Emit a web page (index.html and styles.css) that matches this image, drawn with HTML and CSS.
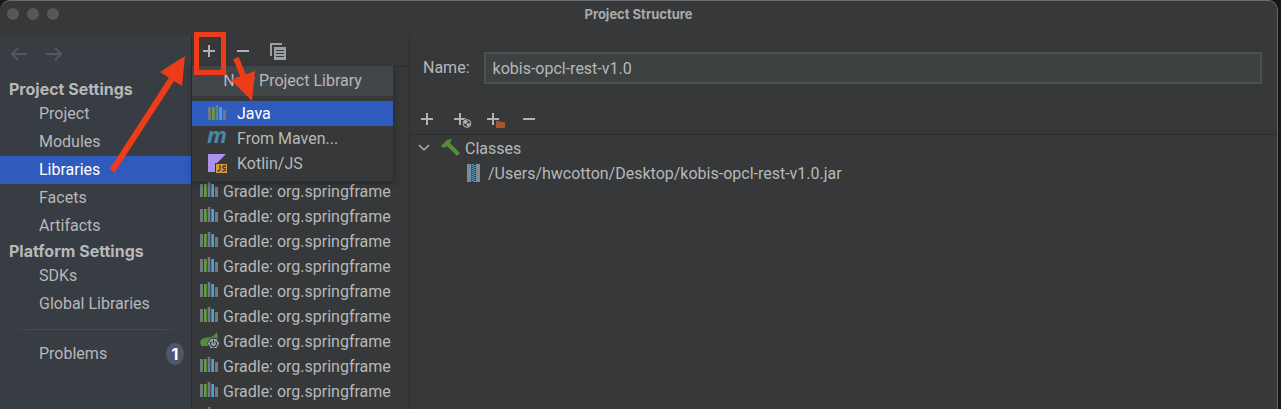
FILE: index.html
```html
<!DOCTYPE html>
<html lang="en">
<head>
<meta charset="utf-8">
<title>Project Structure</title>
<link rel="stylesheet" href="styles.css">
</head>
<body>
<svg class="defs" aria-hidden="true">
  <symbol id="library" viewBox="0 0 18 18">
    <path fill="#6e7b85" d="M0 3h3v13H0zM7.700 1h2.600v15H7.700zM15 6h3v10h-3z"/>
    <path fill="#62a03c" d="M4 3h2.700v13H4z"/>
    <path fill="#48a4d6" d="M11.300 3H14v13h-2.700z"/>
  </symbol>
  <symbol id="plus" viewBox="0 0 14 14"><path fill="#afb1b3" d="M6 1h2v5h5v2H8v5H6V8H1V6h5z"/></symbol>
  <symbol id="minus" viewBox="0 0 14 14"><path fill="#afb1b3" d="M1 6h12v2H1z"/></symbol>
</svg>
<div class="window">
  <header class="titlebar">
    <div class="lights"><i class="light"></i><i class="light"></i><i class="light"></i></div>
    <h1 class="title">Project Structure</h1>
    <div class="lights-spacer"></div>
  </header>
  <div class="body">
    <nav class="sidebar">
      <div class="history">
        <button class="icon-button" aria-label="Back" disabled><svg width="18" height="14" viewBox="0 0 18 14"><path d="M17 7H2M8 1L2 7l6 6" fill="none" stroke="#55585a" stroke-width="2"/></svg></button>
        <button class="icon-button" aria-label="Forward" disabled><svg width="18" height="14" viewBox="0 0 18 14"><path d="M1 7h15M10 1l6 6-6 6" fill="none" stroke="#55585a" stroke-width="2"/></svg></button>
      </div>
      <h2 class="group">Project Settings</h2>
      <a class="item" href="#">Project</a>
      <a class="item" href="#">Modules</a>
      <a class="item selected" href="#">Libraries</a>
      <a class="item" href="#">Facets</a>
      <a class="item" href="#">Artifacts</a>
      <h2 class="group">Platform Settings</h2>
      <a class="item" href="#">SDKs</a>
      <a class="item" href="#">Global Libraries</a>
      <hr class="rule">
      <a class="item" href="#">Problems <span class="badge">1</span></a>
    </nav>
    <section class="libraries">
      <div class="toolbar">
        <button class="icon-button" aria-label="Add"><svg width="14" height="14"><use href="#plus"/></svg></button>
        <button class="icon-button" aria-label="Remove"><svg width="14" height="14"><use href="#minus"/></svg></button>
        <button class="icon-button" aria-label="Copy"><svg width="16" height="17" viewBox="0 0 16 17"><path fill="#9da0a2" fill-rule="evenodd" d="M0 0h12v2H2v11H0zM4 4h12v13H4zM6 7v1h8V7zM6 10v1h8v-1zM6 13v1h8v-1z"/></svg></button>
      </div>
      <ul class="list">
        <li class="row"><svg class="icon"><use href="#library"/></svg><span>Gradle: org.springframework</span></li>
        <li class="row"><svg class="icon"><use href="#library"/></svg><span>Gradle: org.springframework</span></li>
        <li class="row"><svg class="icon"><use href="#library"/></svg><span>Gradle: org.springframework</span></li>
        <li class="row"><svg class="icon"><use href="#library"/></svg><span>Gradle: org.springframework</span></li>
        <li class="row"><svg class="icon"><use href="#library"/></svg><span>Gradle: org.springframework</span></li>
        <li class="row"><svg class="icon"><use href="#library"/></svg><span>Gradle: org.springframework</span></li>
        <li class="row"><svg class="icon" viewBox="0 0 18 18"><path fill="#568c39" d="M17 1c1 4 1 7-1 10l-8 4H2c-3-2-2-7 2-8 5-1 9 0 13-6z"/><path fill="#9aa7b3" stroke="#36383a" d="M10.500 7.500h6l3 5-3 5h-6l-3-5z"/><path d="M11.500 10.500a3 3 0 1 0 4 0M13.500 9v3.500" fill="none" stroke="#30363b" stroke-width="1.300"/></svg><span>Gradle: org.springframework</span></li>
        <li class="row"><svg class="icon"><use href="#library"/></svg><span>Gradle: org.springframework</span></li>
        <li class="row"><svg class="icon"><use href="#library"/></svg><span>Gradle: org.springframework</span></li>
        <li class="row"><svg class="icon"><use href="#library"/></svg><span>Gradle: org.springframework</span></li>
      </ul>
      <div class="popup" role="menu">
        <div class="popup-title">New Project Library</div>
        <div class="popup-items">
          <button class="popup-item active" role="menuitem"><svg class="icon"><use href="#library"/></svg>Java</button>
          <button class="popup-item" role="menuitem"><svg class="icon" viewBox="0 0 18 18" aria-hidden="true"><text class="maven" x="-1" y="14">m</text></svg>From Maven...</button>
          <button class="popup-item" role="menuitem"><svg class="icon" viewBox="0 0 18 18"><path fill="#a991ed" d="M0 0h18L9 9H7v9H0z"/><path fill="#d59c36" d="M8 10h11v9H8z"/><path fill="none" stroke="#493b22" stroke-width="1.300" d="M12 11v4.500q0 1.500-2.500 1.200M18 12h-2.500q-1.500 1.200 0 2.300h1q2 1.200 0 2.500H14"/></svg>Kotlin/JS</button>
        </div>
      </div>
    </section>
    <main class="details">
      <div class="field">
        <label for="name">Name:</label>
        <input id="name" class="input" type="text" value="kobis-opcl-rest-v1.0">
      </div>
      <div class="actions">
        <button class="icon-button" aria-label="Add"><svg width="20" height="18" viewBox="0 0 20 18"><use href="#plus" width="14" height="14" y="2"/></svg></button>
        <button class="icon-button" aria-label="Add from web"><svg width="20" height="18" viewBox="0 0 20 18"><use href="#plus" width="14" height="14" y="2"/><circle cx="14" cy="13.500" r="5" fill="#36383a"/><circle cx="14" cy="13.500" r="3.900" fill="#44484a" stroke="#afb1b3"/><path fill="#afb1b3" d="M10.500 11l3-1 1 2-2 2-2-1zM14.500 13l3 1-2 3-2-2z"/></svg></button>
        <button class="icon-button" aria-label="Add folder"><svg width="20" height="18" viewBox="0 0 20 18"><use href="#plus" width="14" height="14" y="2"/><path fill="#a5552e" d="M10 11h4l1 1h4v6h-9z"/></svg></button>
        <button class="icon-button" aria-label="Remove"><svg width="20" height="18" viewBox="0 0 20 18"><use href="#minus" width="14" height="14" x="3" y="2"/></svg></button>
      </div>
      <div class="tree">
        <div class="node">
          <svg width="12" height="8" viewBox="0 0 12 8"><path d="M1 1l5 5 5-5" fill="none" stroke="#afb1b3" stroke-width="1.500"/></svg>
          <svg class="hammer" width="20" height="18" viewBox="0 0 20 18"><path fill="#568c39" d="M0 7l6-6 5-1-2 4 10 10-3 3L6 7 3 9z"/></svg>
          <span>Classes</span>
        </div>
        <div class="node child">
          <svg width="13" height="18" viewBox="0 0 13 18"><path fill="#7d8b94" d="M0 0h13v18H0z"/><path fill="#2c4654" d="M4 0h5v18H4z"/><path d="M5.500 0v18" stroke="#4ba5d0" stroke-width="2" stroke-dasharray="1 1"/><path d="M7.500 1v17" stroke="#4ba5d0" stroke-width="2" stroke-dasharray="1 1"/></svg>
          <span>/Users/hwcotton/Desktop/kobis-opcl-rest-v1.0.jar</span>
        </div>
      </div>
    </main>
  </div>
  <svg class="annotation" width="270" height="180" viewBox="0 0 270 180" aria-hidden="true">
    <g fill="none" stroke="#ed3c19">
      <path stroke-width="5" d="M196.500 34.500h27v38h-27z"/>
      <path stroke-width="6" d="M112 171l61-94M236 58l8 20"/>
    </g>
    <path fill="#ed3c19" d="M185 56l-25 16 22 14zM252 101l-21-21 24-9z"/>
  </svg>
</div>
</body>
</html>
```
FILE: styles.css
```css
* { box-sizing: border-box; }
body {
  margin: 0;
  background: #171615;
  color: #b7b8b9;
  font: 16px/24px Roboto, "Liberation Sans", sans-serif;
}
.defs { position: absolute; width: 0; height: 0; }
.window {
  position: relative;
  display: flex;
  flex-direction: column;
  height: 100vh;
  margin-right: 3px;
  overflow: hidden;
  background: #36383a;
  border-top: 1px solid #6c6e6f;
  border-right: 1px solid #626465;
  border-radius: 10px 10px 0 0;
}
.titlebar { display: flex; align-items: center; height: 35px; padding: 0 7px 9px; flex: none; }
.lights, .lights-spacer { display: flex; gap: 8px; width: 60px; }
.light { width: 12px; height: 12px; border-radius: 50%; background: #555759; }
.title { flex: 1; margin: 0; text-align: center; font: 700 13px/16px Inter, sans-serif; color: #a9aaab; }
.body { display: flex; flex: 1; min-height: 0; }
.icon-button { display: flex; padding: 0; border: 0; background: none; }
.icon { width: 18px; height: 18px; flex: none; overflow: visible; }
.maven { fill: #4689a8; font: italic 700 22px "Open Sans", sans-serif; }

.sidebar { width: 192px; flex: none; background: #383c43; border-right: 1px solid #2b2d2f; }
.history { display: flex; gap: 17px; height: 42px; padding: 11px 10px; }
.group { margin: 0; padding-left: 9px; font: 700 16px/22px Inter, sans-serif; }
.item { display: flex; align-items: center; justify-content: space-between; height: 28px; padding: 0 7px 0 39px; color: inherit; text-decoration: none; }
.selected { background: #2f5bbd; color: #fff; }
.rule { height: 1px; margin: 11px 9px 10px; border: 0; background: linear-gradient(to right, transparent, #484a4c 10%, #484a4c 90%, transparent); }
.badge { width: 18px; height: 22px; border-radius: 50%; background: #505568; color: #fff; font: 700 16px/22px Inter, sans-serif; text-align: center; }

.libraries { position: relative; display: flex; flex-direction: column; width: 218px; flex: none; border-right: 1px solid #2b2d2f; }
.toolbar { display: flex; align-items: center; gap: 20px; height: 30px; padding-left: 10px; flex: none; }
.list { flex: 1; min-height: 0; margin: 0; padding: 112px 18px 0 8px; overflow: hidden; list-style: none; border-top: 1px solid #2b2d2f; }
.row { display: flex; align-items: center; gap: 5px; height: 25px; overflow: hidden; white-space: nowrap; }
.row .icon { margin-bottom: 4px; }
.popup { position: absolute; top: 30px; left: 0; width: 202px; background: #36383a; border-right: 1px solid #2d2f30; border-bottom: 1px solid #2d2f30; box-shadow: 0 2px 6px #0004; }
.popup-title { height: 30px; background: #424648; line-height: 30px; text-align: center; }
.popup-items { padding: 5px 0; }
.popup-item { display: flex; align-items: center; gap: 11px; width: 100%; height: 25px; padding: 0 16px; border: 0; background: none; color: inherit; font: inherit; text-align: left; }
.popup-item .icon { margin-bottom: 2px; }
.active { background: #2f5bbd; color: #fff; }

.details { flex: 1; min-width: 0; }
.field { display: flex; align-items: center; gap: 14px; padding: 16px 15px 0 13px; }
.input { flex: 1; min-width: 0; height: 32px; padding: 0 7px; border: 2px solid #4e5152; background: #3d4142; color: inherit; font: inherit; }
.actions { display: flex; gap: 13px; padding: 26px 10px 6px; }
.tree { padding-top: 1px; border-top: 1px solid #2b2d2f; }
.node { display: flex; align-items: center; height: 25px; padding-left: 8px; }
.node svg { margin-bottom: 2px; }
.hammer { margin: 0 4px 0 11px; }
.child { gap: 8px; padding-left: 57px; }

.annotation { position: absolute; top: -1px; left: 0; pointer-events: none; }
```
